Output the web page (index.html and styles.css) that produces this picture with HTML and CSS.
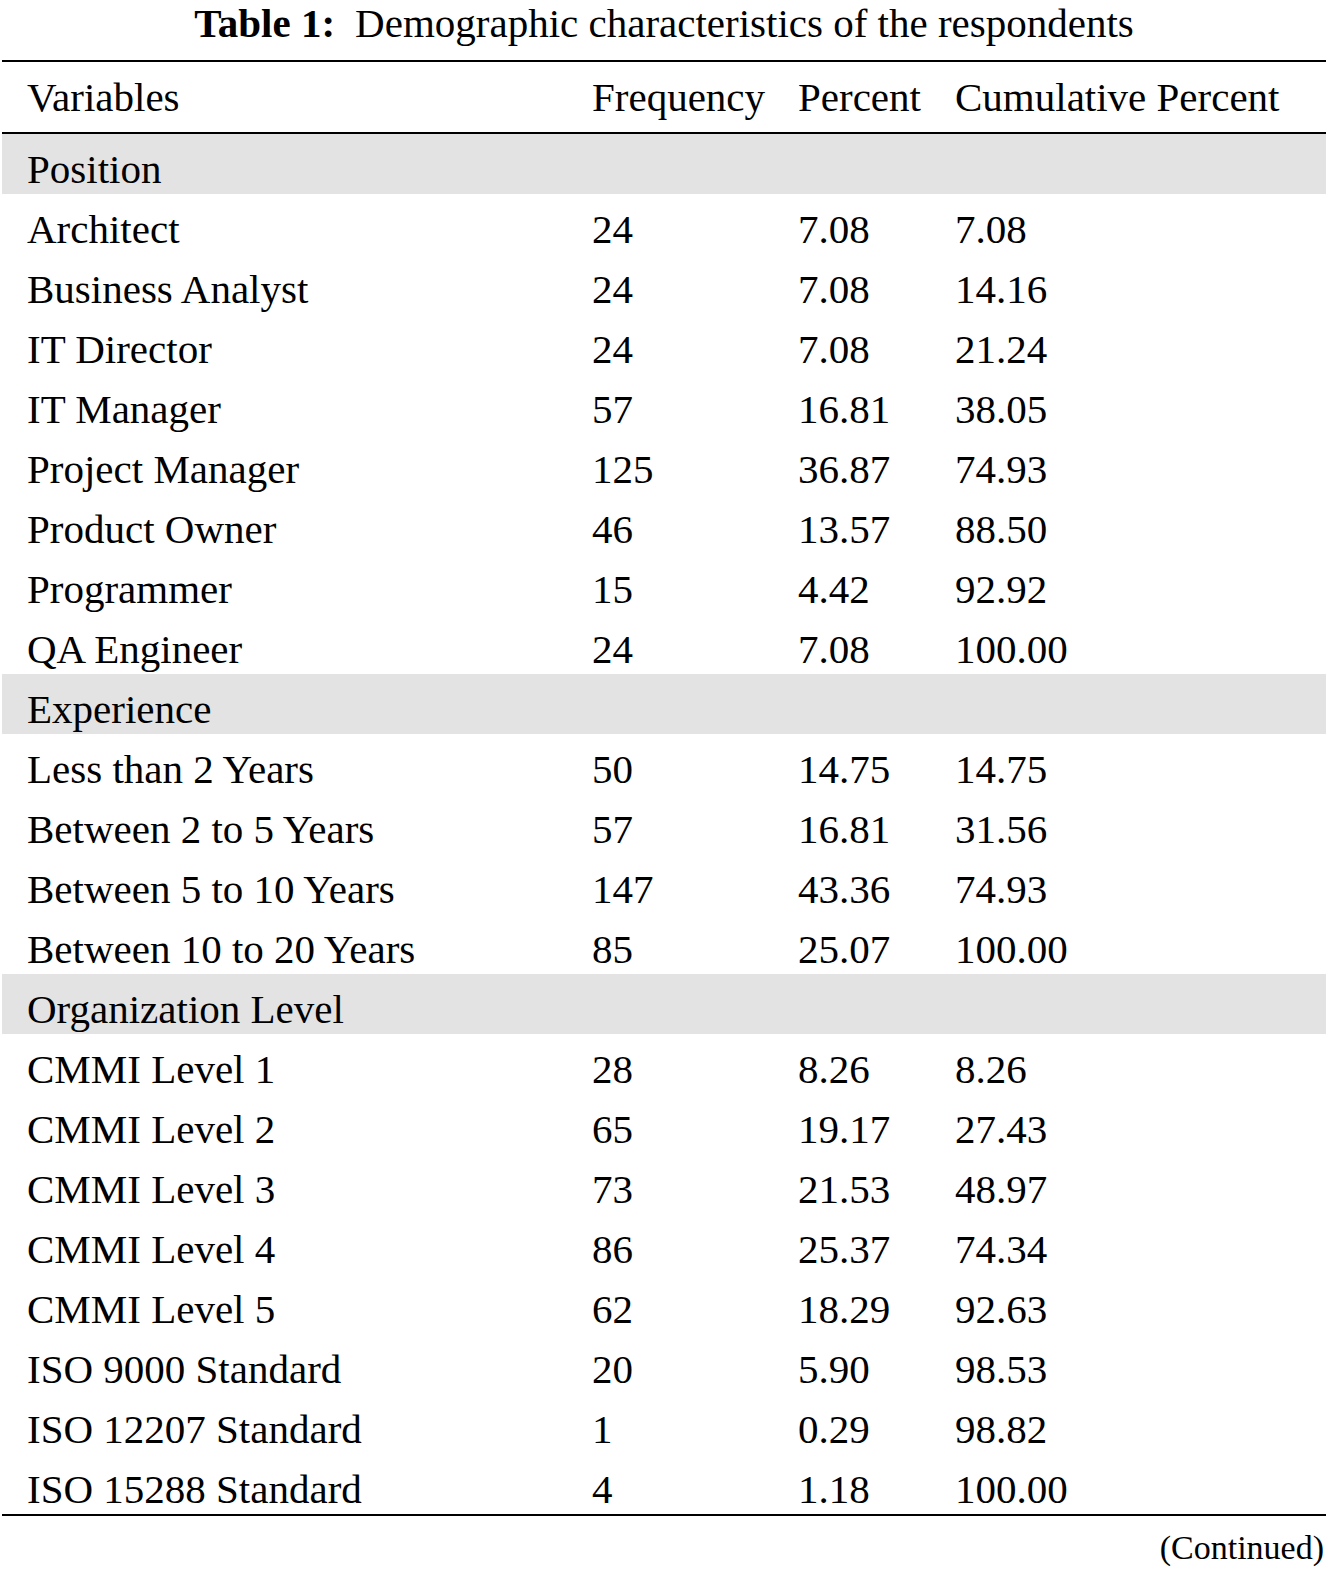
FILE: index.html
```html
<!DOCTYPE html>
<html>
<head>
<meta charset="utf-8">
<link rel="stylesheet" href="styles.css">
</head>
<body>
<div class="page">
  <div class="title"><b>Table 1:</b><span class="title-text">Demographic characteristics of the respondents</span></div>
  <div class="table">
    <div class="row head"><span>Variables</span><span>Frequency</span><span>Percent</span><span>Cumulative Percent</span></div>
    <div class="body">
      <div class="row section"><span>Position</span></div>
      <div class="row"><span>Architect</span><span>24</span><span>7.08</span><span>7.08</span></div>
      <div class="row"><span>Business Analyst</span><span>24</span><span>7.08</span><span>14.16</span></div>
      <div class="row"><span>IT Director</span><span>24</span><span>7.08</span><span>21.24</span></div>
      <div class="row"><span>IT Manager</span><span>57</span><span>16.81</span><span>38.05</span></div>
      <div class="row"><span>Project Manager</span><span>125</span><span>36.87</span><span>74.93</span></div>
      <div class="row"><span>Product Owner</span><span>46</span><span>13.57</span><span>88.50</span></div>
      <div class="row"><span>Programmer</span><span>15</span><span>4.42</span><span>92.92</span></div>
      <div class="row"><span>QA Engineer</span><span>24</span><span>7.08</span><span>100.00</span></div>
      <div class="row section"><span>Experience</span></div>
      <div class="row"><span>Less than 2 Years</span><span>50</span><span>14.75</span><span>14.75</span></div>
      <div class="row"><span>Between 2 to 5 Years</span><span>57</span><span>16.81</span><span>31.56</span></div>
      <div class="row"><span>Between 5 to 10 Years</span><span>147</span><span>43.36</span><span>74.93</span></div>
      <div class="row"><span>Between 10 to 20 Years</span><span>85</span><span>25.07</span><span>100.00</span></div>
      <div class="row section"><span>Organization Level</span></div>
      <div class="row"><span>CMMI Level 1</span><span>28</span><span>8.26</span><span>8.26</span></div>
      <div class="row"><span>CMMI Level 2</span><span>65</span><span>19.17</span><span>27.43</span></div>
      <div class="row"><span>CMMI Level 3</span><span>73</span><span>21.53</span><span>48.97</span></div>
      <div class="row"><span>CMMI Level 4</span><span>86</span><span>25.37</span><span>74.34</span></div>
      <div class="row"><span>CMMI Level 5</span><span>62</span><span>18.29</span><span>92.63</span></div>
      <div class="row"><span>ISO 9000 Standard</span><span>20</span><span>5.90</span><span>98.53</span></div>
      <div class="row"><span>ISO 12207 Standard</span><span>1</span><span>0.29</span><span>98.82</span></div>
      <div class="row"><span>ISO 15288 Standard</span><span>4</span><span>1.18</span><span>100.00</span></div>
    </div>
  </div>
  <div class="continued">(Continued)</div>
</div>
</body>
</html>
```

FILE: styles.css
```css
html, body {
  margin: 0;
  padding: 0;
  background: #ffffff;
}

body {
  font-family: "Liberation Serif", "Times New Roman", serif;
  color: #000;
}

.page {
  padding: 0 2px;
}

.title {
  font-size: 41px;
  line-height: 46px;
  height: 46px;
  text-align: center;
  white-space: nowrap;
}

.title b {
  font-weight: bold;
}

.title-text {
  margin-left: 20px;
}

.table {
  margin-top: 14px;
  border-top: 2px solid #000;
  border-bottom: 2px solid #000;
}

.row {
  display: grid;
  grid-template-columns: 565px 206px 157px 1fr;
  padding-left: 25px;
  height: 60px;
  box-sizing: border-box;
  padding-top: 10px;
  font-size: 41px;
  line-height: 50px;
  white-space: nowrap;
}

.row.head {
  height: 70px;
  padding-top: 10px;
}

.body {
  border-top: 2px solid #000;
}

.row.section {
  background: #e3e3e3;
}

.continued {
  text-align: right;
  font-size: 34px;
  line-height: 44px;
  padding-right: 2px;
  margin-top: 10px;
}
```
